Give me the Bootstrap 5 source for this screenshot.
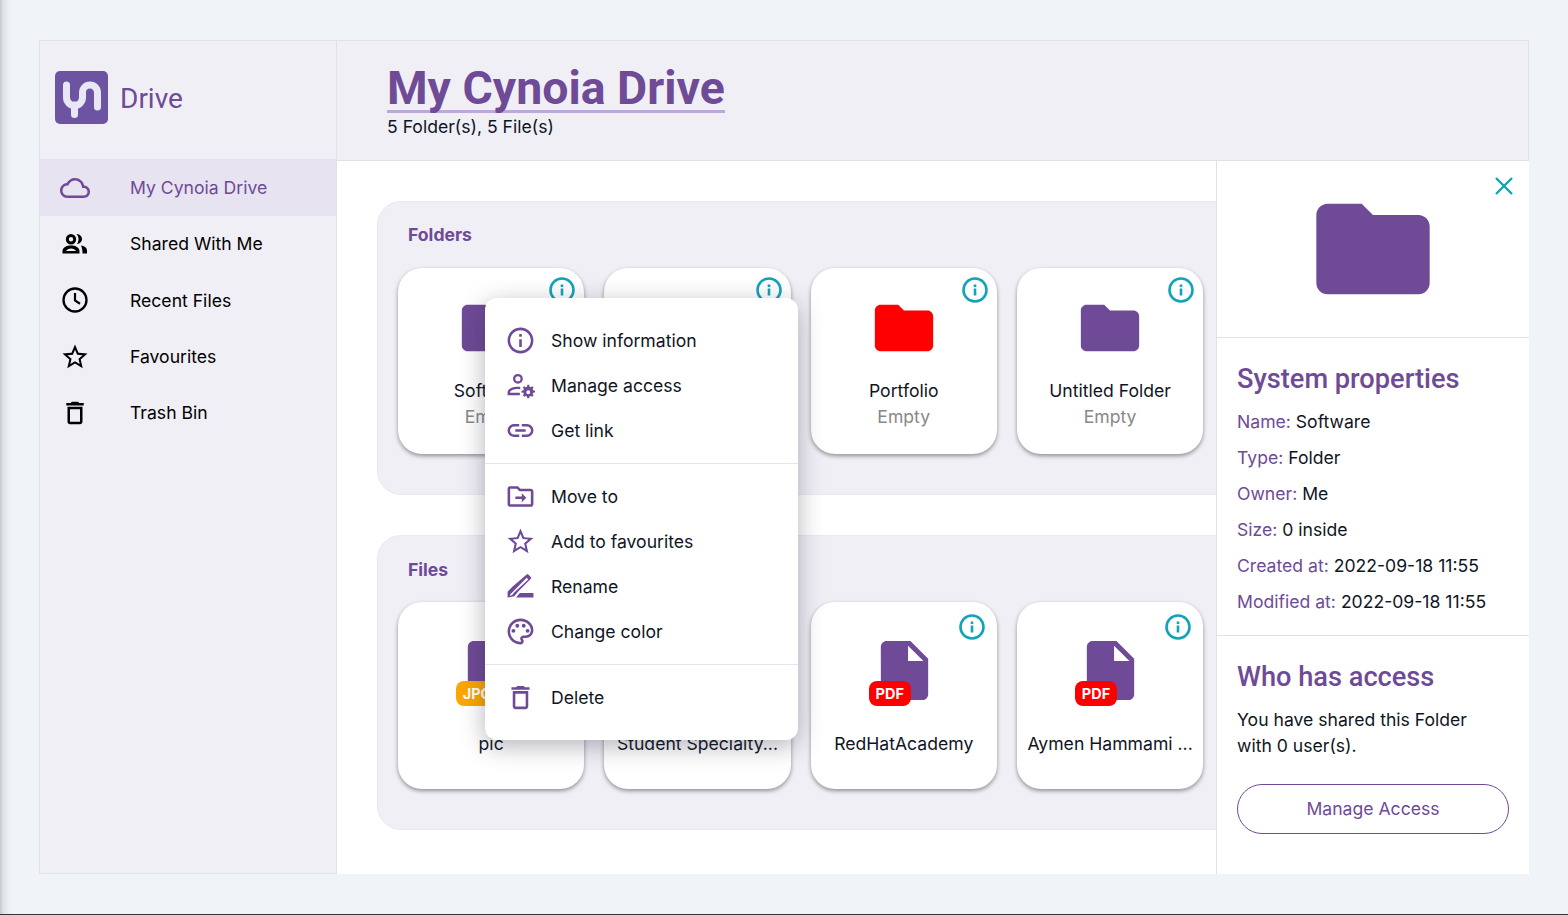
<!doctype html>
<html lang="en">
<head>
<meta charset="utf-8">
<title>My Cynoia Drive</title>
<link href="https://cdn.jsdelivr.net/npm/bootstrap@5.3.0/dist/css/bootstrap.min.css" rel="stylesheet">
<style>
html,body{height:100%;overflow:hidden}
body{background:linear-gradient(to right,#c5c8cb 0,#dde0e4 3px,#eef1f6 10px,#f0f3f8 14px);font-family:Inter,sans-serif;color:#0f1524;font-size:17.6px;border-bottom:1px solid #333;}
.shell{margin:40px 39px 0 39px;height:834px;border:1px solid #e1e2e8;border-right:0;border-bottom:0;display:grid;grid-template-columns:297px minmax(0,1fr);grid-template-rows:120px minmax(0,1fr);background:#fff}
.side{grid-row:1/3;background:#f0eff6;border-right:1px solid #e1e2e8;border-bottom:1px solid #e1e2e8}
.brand{height:118px;padding:0 0 5px 15px;gap:12px}
.logo-box{width:53px;height:53px;display:block}
.brand-name{font-family:Roboto,sans-serif;font-size:28px;color:#6f4a96;margin-top:2px}
.side-link{height:56.3px;color:#000;padding:1px 0 0 20px;text-decoration:none}
.side-link.on{background:#e7e3f0;color:#6f4a96;height:57px}
.side-link svg{width:30px;height:30px;margin-right:40px;margin-top:-1px;fill:currentColor}
.top{background:#f0eff6;border-bottom:1px solid #e1e2e8;border-right:1px solid #e1e2e8;padding:25px 0 0 50px}
.big-title{font-family:Roboto,sans-serif;font-weight:700;font-size:46.4px;line-height:44px;color:#6f4a96;border-bottom:3px solid #bda8d6;display:inline-block;margin:0}
.sub-title{font-size:17.6px;line-height:26px;color:#0f1524;margin-top:1px}
.body-row{min-height:0}
.work{position:relative;flex:1;min-width:0;overflow:hidden;padding:40px 0 0 40px}
.shelf{background:#f0eff6;border:1px solid #e8e8ef;border-radius:24px;width:1000px;height:294px;padding:0 0 0 20px;margin-bottom:40px}
.shelf.tall{height:295px}
.shelf-title{font-weight:700;font-size:17.6px;color:#6f4a96;line-height:24px;padding:21px 0 0 10px;height:66px}
.shelf-title.low{padding-top:22px}
.tiles{display:grid;grid-template-columns:repeat(4,186.3px);column-gap:20px}
.tile{position:relative;background:#fff;border-radius:24px;height:186px;box-shadow:0 2px 4px rgba(0,0,0,.4);text-align:center;line-height:26px}
.tile.file-tile{height:187px}
.tile .ic{position:absolute;top:9px;right:9px;width:26px;height:26px;fill:none;stroke:#13a3b8}
.f-ic{width:70px;height:70px;display:block;margin:25px auto 0;fill:#6f4a96}
.tile-name{margin-top:15px}
.tile-sub{color:#888}
.file-wrap{position:relative;width:70px;height:70px;margin:0 auto}
.file-wrap svg{width:71px;height:71px;fill:#6f4a96;display:block;margin-top:0}
.file-tile{padding-top:33px}
.file-tile .ic{top:12px;right:12px}
.tag{position:absolute;top:46px;left:0;width:42px;height:25px;border-radius:8px;color:#fff;font-weight:700;font-size:14.5px;line-height:25px;text-align:center}
.tag-pdf{background:#f00}
.tag-jpg{background:#fca700}
.file-name{margin-top:26px;padding:0 8px;white-space:nowrap;overflow:hidden}
.pop{position:absolute;left:148px;top:137px;width:313px;height:442px;background:#fff;border-radius:12px;box-shadow:0 6px 24px rgba(40,40,60,.35);z-index:5;padding-top:20px}
.pop-row{height:45px;padding:2px 0 0 20px}
.pop-row svg{width:31px;height:31px;margin:-2px 15px 0 0;fill:#6f4a96;flex:none}
.pop-line{border-top:1px solid #e3e4ec;margin:10px 0}
.info{width:313px;flex:none;border-left:1px solid #e1e2e8;background:#fff}
.info-top{height:177px;border-bottom:1px solid #e1e2e8;position:relative}
.info-top .big-f{width:136px;height:136px;fill:#6f4a96;position:absolute;left:88px;top:20px}
.close-x{position:absolute;right:16px;top:16px;width:18px;height:18px;stroke:#13a3b8;stroke-width:2.4;fill:none}
.info-block{padding:0 20px}
.block-a{height:298px;border-bottom:1px solid #e1e2e8;padding-top:24px}
.block-h{font-family:Roboto,sans-serif;font-weight:500;font-size:27.2px;line-height:34px;color:#6f4a96;margin:0 0 8px}
.prop{line-height:36px;color:#0f1524;margin:0;white-space:nowrap}
.prop b{font-weight:400;color:#6f4a96}
.block-b{padding-top:24px}
.block-b .block-h{margin-bottom:13px}
.share-note{line-height:26px;margin:0 0 25px}
.manage{display:block;width:272px;height:50px;border:1px solid #6f4a96;border-radius:25px;color:#6f4a96;line-height:48px;text-align:center;text-decoration:none;background:#fff}
</style>
</head>
<body>
<svg width="0" height="0" class="position-absolute">
<defs>
<symbol id="info" viewBox="0 0 26 26"><circle cx="13" cy="13" r="11.5" fill="none" stroke-width="2.6"/><rect x="11.7" y="11.5" width="2.6" height="7" stroke="none" fill="#13a3b8"/><rect x="11.7" y="7.5" width="2.6" height="2.6" stroke="none" fill="#13a3b8"/></symbol>
<symbol id="folder" viewBox="0 0 24 24"><path d="M10 4H4c-1.1 0-2 .9-2 2v12c0 1.1.9 2 2 2h16c1.1 0 2-.9 2-2V8c0-1.1-.9-2-2-2h-8l-2-2z"/></symbol>
<symbol id="file" viewBox="0 0 24 24"><path d="M14 2H6c-1.1 0-2 .9-2 2v16c0 1.1.9 2 2 2h12c1.1 0 2-.9 2-2V8l-6-6z"/><path d="M13.2 3.6v5.2h5.2z" fill="#fff"/></symbol>
</defs>
</svg>
<div class="shell">
  <aside class="side">
    <div class="brand d-flex align-items-center">
      <svg class="logo-box" viewBox="0 0 53 53"><rect width="53" height="53" rx="5" fill="#6c54a3"/><path d="M11.500 14V26.500a8 8 0 0 0 16 0V21.500a7.500 7.500 0 0 1 15 0V36M19.500 34V43.500" fill="none" stroke="#e9e7f3" stroke-width="7" stroke-linecap="round"/></svg>
      <span class="brand-name">Drive</span>
    </div>
    <nav class="d-flex flex-column">
      <a class="side-link on d-flex align-items-center" href="#"><svg viewBox="0 0 24 24"><path d="M19.35 10.04C18.67 6.59 15.64 4 12 4 9.11 4 6.6 5.64 5.35 8.04 2.34 8.36 0 10.91 0 14c0 3.31 2.69 6 6 6h13c2.76 0 5-2.24 5-5 0-2.64-2.05-4.78-4.65-4.96zM19 18H6c-2.21 0-4-1.79-4-4 0-2.05 1.53-3.76 3.56-3.97l1.07-.11.5-.95C8.08 7.14 9.94 6 12 6c2.62 0 4.88 1.86 5.39 4.43l.3 1.5 1.53.11c1.56.1 2.78 1.41 2.78 2.96 0 1.65-1.35 3-3 3z"/></svg>My Cynoia Drive</a>
      <a class="side-link d-flex align-items-center" href="#"><svg viewBox="0 0 30 30"><path fill-rule="evenodd" d="M11 5a5.200 5.200 0 1 1 0 10.400A5.200 5.200 0 0 1 11 5zm0 3a2.200 2.200 0 1 0 0 4.400 2.200 2.200 0 0 0 0-4.400z"/><path fill-rule="evenodd" d="M2.500 24.500v-2.500c0-3.500 4-5.500 8.500-5.500s8.500 2 8.500 5.500v2.500zM6 22h10c-.8-1.500-3-2.500-5-2.500S6.800 20.500 6 22z"/><path d="M16.500 5c3 0 5.500 2.200 5.500 5s-2.500 5-5 5c1-1.300 1.500-3.200 1.500-5S17.700 6.300 16.500 5zM21 16.500c3 .5 6 2 6 5v3h-4.500c0-3-.5-5.800-1.500-8z"/></svg>Shared With Me</a>
      <a class="side-link d-flex align-items-center" href="#"><svg viewBox="0 0 30 30"><circle cx="15" cy="15" r="11.500" fill="none" stroke="currentColor" stroke-width="2.300"/><path d="M15 8v7.500l5 3.200" fill="none" stroke="currentColor" stroke-width="2.200"/></svg>Recent Files</a>
      <a class="side-link d-flex align-items-center" href="#"><svg viewBox="0 0 24 24"><path d="M22 9.240l-7.190-.62L12 2 9.190 8.630 2 9.240l5.460 4.730L5.820 21 12 17.270 18.180 21l-1.630-7.030L22 9.240zM12 15.400l-3.760 2.270 1-4.280-3.320-2.880 4.380-.38L12 6.100l1.710 4.040 4.380.38-3.320 2.880 1 4.280L12 15.400z"/></svg>Favourites</a>
      <a class="side-link d-flex align-items-center" href="#"><svg viewBox="0 0 24 24"><path d="M6 19c0 1.100.9 2 2 2h8c1.100 0 2-.9 2-2V7H6v12zM8 9h8v10H8V9zm7.500-5l-1-1h-5l-1 1H5v2h14V4z"/></svg>Trash Bin</a>
    </nav>
  </aside>
  <header class="top">
    <h1 class="big-title">My Cynoia Drive</h1>
    <div class="sub-title">5 Folder(s), 5 File(s)</div>
  </header>
  <div class="body-row d-flex">
    <main class="work">
      <section class="shelf">
        <div class="shelf-title">Folders</div>
        <div class="tiles">
          <div class="tile"><svg class="ic"><use href="#info"/></svg><svg class="f-ic"><use href="#folder"/></svg><div class="tile-name">Software</div><div class="tile-sub">Empty</div></div>
          <div class="tile"><svg class="ic"><use href="#info"/></svg><svg class="f-ic"><use href="#folder"/></svg></div>
          <div class="tile"><svg class="ic"><use href="#info"/></svg><svg class="f-ic" style="fill:#f00"><use href="#folder"/></svg><div class="tile-name">Portfolio</div><div class="tile-sub">Empty</div></div>
          <div class="tile"><svg class="ic"><use href="#info"/></svg><svg class="f-ic"><use href="#folder"/></svg><div class="tile-name">Untitled Folder</div><div class="tile-sub">Empty</div></div>
        </div>
      </section>
      <section class="shelf tall">
        <div class="shelf-title low">Files</div>
        <div class="tiles">
          <div class="tile file-tile"><svg class="ic"><use href="#info"/></svg><div class="file-wrap"><svg><use href="#file"/></svg><span class="tag tag-jpg">JPG</span></div><div class="file-name">pic</div></div>
          <div class="tile file-tile"><svg class="ic"><use href="#info"/></svg><div class="file-wrap"><svg><use href="#file"/></svg><span class="tag tag-pdf">PDF</span></div><div class="file-name">Student Specialty...</div></div>
          <div class="tile file-tile"><svg class="ic"><use href="#info"/></svg><div class="file-wrap"><svg><use href="#file"/></svg><span class="tag tag-pdf">PDF</span></div><div class="file-name">RedHatAcademy</div></div>
          <div class="tile file-tile"><svg class="ic"><use href="#info"/></svg><div class="file-wrap"><svg><use href="#file"/></svg><span class="tag tag-pdf">PDF</span></div><div class="file-name">Aymen Hammami ...</div></div>
        </div>
      </section>
      <div class="pop">
        <div class="pop-row d-flex align-items-center"><svg viewBox="0 0 24 24"><path d="M11 7h2v2h-2zm0 4h2v6h-2zm1-9C6.480 2 2 6.480 2 12s4.480 10 10 10 10-4.480 10-10S17.520 2 12 2zm0 18c-4.410 0-8-3.590-8-8s3.590-8 8-8 8 3.590 8 8-3.590 8-8 8z"/></svg>Show information</div>
        <div class="pop-row d-flex align-items-center"><svg viewBox="0 0 24 24"><path fill-rule="evenodd" d="M10 3a3.800 3.800 0 1 1 0 7.600A3.800 3.800 0 0 1 10 3zm0 1.800a2 2 0 1 0 0 4 2 2 0 0 0 0-4zM2 19.500v-2.200c0-2.500 3.500-4.300 8-4.300.6 0 1.200 0 1.800.1v1.900c-.6-.1-1.200-.2-1.800-.2-3 0-6 1.200-6 2.500v.4h7.500v1.800z"/><path fill-rule="evenodd" d="M17.300 11.500h1.400l.3 1.400.9.400 1.200-.7 1 1-.7 1.200.4.900 1.400.3v1.400l-1.400.3-.4.900.7 1.200-1 1-1.200-.7-.9.400-.3 1.400h-1.400l-.3-1.400-.9-.4-1.200.7-1-1 .7-1.200-.4-.9-1.400-.3v-1.400l1.400-.3.4-.9-.7-1.200 1-1 1.200.7.900-.4.300-1.300zm.7 4.200a1.500 1.500 0 1 0 0 3 1.500 1.500 0 0 0 0-3z"/></svg>Manage access</div>
        <div class="pop-row d-flex align-items-center"><svg viewBox="0 0 24 24"><path d="M3.900 12c0-1.710 1.390-3.100 3.100-3.100h4V7H7c-2.760 0-5 2.240-5 5s2.240 5 5 5h4v-1.900H7c-1.710 0-3.100-1.390-3.100-3.100zM8 13h8v-2H8v2zm9-6h-4v1.900h4c1.710 0 3.100 1.390 3.100 3.100s-1.390 3.100-3.100 3.100h-4V17h4c2.760 0 5-2.240 5-5s-2.240-5-5-5z"/></svg>Get link</div>
        <div class="pop-line"></div>
        <div class="pop-row d-flex align-items-center"><svg viewBox="0 0 24 24"><path d="M20 6h-8l-2-2H4c-1.100 0-2 .9-2 2v12c0 1.100.9 2 2 2h16c1.100 0 2-.9 2-2V8c0-1.100-.9-2-2-2zm0 12H4V6h5.170l2 2H20v10z"/><path d="M13 9.500l3.500 3.500-3.500 3.500V14H8v-2h5z"/></svg>Move to</div>
        <div class="pop-row d-flex align-items-center"><svg viewBox="0 0 24 24"><path d="M22 9.240l-7.190-.62L12 2 9.190 8.630 2 9.240l5.460 4.730L5.820 21 12 17.270 18.180 21l-1.630-7.030L22 9.240zM12 15.400l-3.760 2.270 1-4.280-3.320-2.880 4.380-.38L12 6.100l1.710 4.040 4.380.38-3.320 2.880 1 4.280L12 15.400z"/></svg>Add to favourites</div>
        <div class="pop-row d-flex align-items-center"><svg viewBox="0 0 24 24"><path fill-rule="evenodd" d="M17 2.500l.9.100 2.200 2.200.1 1-9.800 9.800-3.200 3.900-5.200 1V16l3.500-3.700zM16.800 5.300L6.300 15.800l-2.300 2.300v1l1.300-.3 2-2.300L18 6.500z"/><path d="M11.500 17H22v3.500H8.500z"/></svg>Rename</div>
        <div class="pop-row d-flex align-items-center"><svg viewBox="0 0 24 24"><path d="M12 22C6.490 22 2 17.510 2 12S6.490 2 12 2s10 4.040 10 9c0 3.310-2.690 6-6 6h-1.770c-.28 0-.5.22-.5.5 0 .12.05.23.13.33.41.47.64 1.060.64 1.670 0 1.380-1.120 2.500-2.500 2.500zm0-18c-4.410 0-8 3.590-8 8s3.590 8 8 8c.28 0 .5-.22.5-.5 0-.16-.08-.28-.14-.35-.41-.46-.63-1.050-.63-1.650 0-1.380 1.120-2.500 2.500-2.500H16c2.210 0 4-1.790 4-4 0-3.860-3.590-7-8-7z"/><circle cx="6.500" cy="11.500" r="1.500"/><circle cx="9.500" cy="7.500" r="1.500"/><circle cx="14.500" cy="7.500" r="1.500"/><circle cx="17.500" cy="11.500" r="1.500"/></svg>Change color</div>
        <div class="pop-line"></div>
        <div class="pop-row d-flex align-items-center"><svg viewBox="0 0 24 24"><path d="M6 19c0 1.100.9 2 2 2h8c1.100 0 2-.9 2-2V7H6v12zM8 9h8v10H8V9zm7.500-5l-1-1h-5l-1 1H5v2h14V4z"/></svg>Delete</div>
      </div>
    </main>
    <aside class="info">
      <div class="info-top">
        <svg class="big-f"><use href="#folder"/></svg>
        <svg class="close-x" viewBox="0 0 18 18"><path d="M1 1l16 16M17 1L1 17"/></svg>
      </div>
      <div class="info-block block-a">
        <h2 class="block-h">System properties</h2>
        <p class="prop"><b>Name:</b> Software</p>
        <p class="prop"><b>Type:</b> Folder</p>
        <p class="prop"><b>Owner:</b> Me</p>
        <p class="prop"><b>Size:</b> 0 inside</p>
        <p class="prop"><b>Created at:</b> 2022-09-18 11:55</p>
        <p class="prop"><b>Modified at:</b> 2022-09-18 11:55</p>
      </div>
      <div class="info-block block-b">
        <h2 class="block-h">Who has access</h2>
        <p class="share-note">You have shared this Folder<br>with 0 user(s).</p>
        <a class="manage" href="#">Manage Access</a>
      </div>
    </aside>
  </div>
</div>
<script src="https://cdn.jsdelivr.net/npm/bootstrap@5.3.0/dist/js/bootstrap.bundle.min.js"></script>
</body>
</html>
